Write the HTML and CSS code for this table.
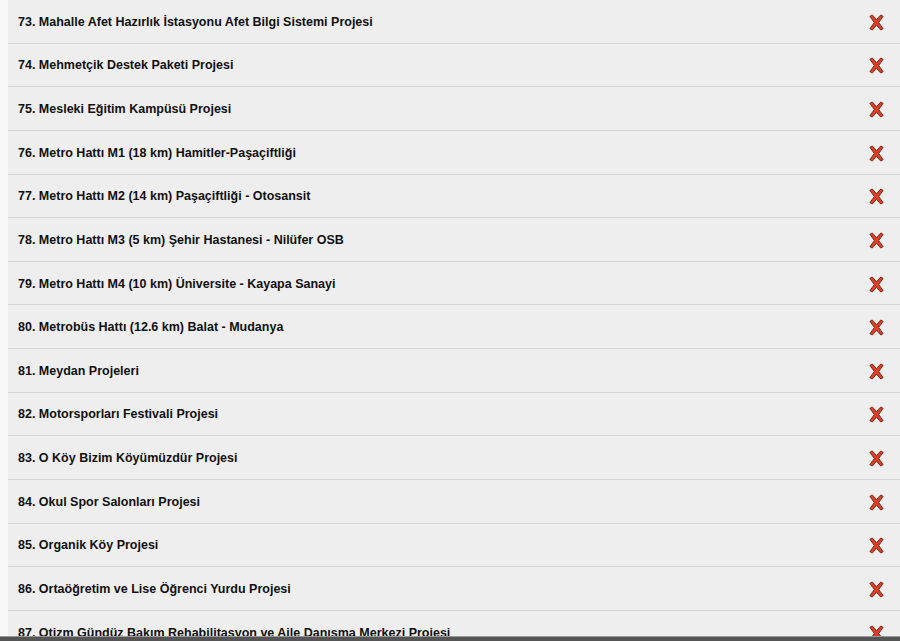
FILE: index.html
```html
<!DOCTYPE html>
<html lang="tr">
<head>
    <meta charset="UTF-8">
    <title>Projeler</title>
    <link rel="stylesheet" href="styles.css">
</head>
<body>

    <!-- Project list -->
    <ul class="project-list">
        <li class="project-row"><span class="project-name">73. Mahalle Afet Hazırlık İstasyonu Afet Bilgi Sistemi Projesi</span><a href="#" class="remove-btn"><svg viewBox="0 0 20 18"><path d="M3 2.5 L5.5 1 L10 6 L14.5 1 L17 2.5 L12.3 9 L17 15.5 L14.5 17 L10 12 L5.5 17 L3 15.5 L7.7 9 Z"/></svg></a></li>
        <li class="project-row"><span class="project-name">74. Mehmetçik Destek Paketi Projesi</span><a href="#" class="remove-btn"><svg viewBox="0 0 20 18"><path d="M3 2.5 L5.5 1 L10 6 L14.5 1 L17 2.5 L12.3 9 L17 15.5 L14.5 17 L10 12 L5.5 17 L3 15.5 L7.7 9 Z"/></svg></a></li>
        <li class="project-row"><span class="project-name">75. Mesleki Eğitim Kampüsü Projesi</span><a href="#" class="remove-btn"><svg viewBox="0 0 20 18"><path d="M3 2.5 L5.5 1 L10 6 L14.5 1 L17 2.5 L12.3 9 L17 15.5 L14.5 17 L10 12 L5.5 17 L3 15.5 L7.7 9 Z"/></svg></a></li>
        <li class="project-row"><span class="project-name">76. Metro Hattı M1 (18 km) Hamitler-Paşaçiftliği</span><a href="#" class="remove-btn"><svg viewBox="0 0 20 18"><path d="M3 2.5 L5.5 1 L10 6 L14.5 1 L17 2.5 L12.3 9 L17 15.5 L14.5 17 L10 12 L5.5 17 L3 15.5 L7.7 9 Z"/></svg></a></li>
        <li class="project-row"><span class="project-name">77. Metro Hattı M2 (14 km) Paşaçiftliği - Otosansit</span><a href="#" class="remove-btn"><svg viewBox="0 0 20 18"><path d="M3 2.5 L5.5 1 L10 6 L14.5 1 L17 2.5 L12.3 9 L17 15.5 L14.5 17 L10 12 L5.5 17 L3 15.5 L7.7 9 Z"/></svg></a></li>
        <li class="project-row"><span class="project-name">78. Metro Hattı M3 (5 km) Şehir Hastanesi - Nilüfer OSB</span><a href="#" class="remove-btn"><svg viewBox="0 0 20 18"><path d="M3 2.5 L5.5 1 L10 6 L14.5 1 L17 2.5 L12.3 9 L17 15.5 L14.5 17 L10 12 L5.5 17 L3 15.5 L7.7 9 Z"/></svg></a></li>
        <li class="project-row"><span class="project-name">79. Metro Hattı M4 (10 km) Üniversite - Kayapa Sanayi</span><a href="#" class="remove-btn"><svg viewBox="0 0 20 18"><path d="M3 2.5 L5.5 1 L10 6 L14.5 1 L17 2.5 L12.3 9 L17 15.5 L14.5 17 L10 12 L5.5 17 L3 15.5 L7.7 9 Z"/></svg></a></li>
        <li class="project-row"><span class="project-name">80. Metrobüs Hattı (12.6 km) Balat - Mudanya</span><a href="#" class="remove-btn"><svg viewBox="0 0 20 18"><path d="M3 2.5 L5.5 1 L10 6 L14.5 1 L17 2.5 L12.3 9 L17 15.5 L14.5 17 L10 12 L5.5 17 L3 15.5 L7.7 9 Z"/></svg></a></li>
        <li class="project-row"><span class="project-name">81. Meydan Projeleri</span><a href="#" class="remove-btn"><svg viewBox="0 0 20 18"><path d="M3 2.5 L5.5 1 L10 6 L14.5 1 L17 2.5 L12.3 9 L17 15.5 L14.5 17 L10 12 L5.5 17 L3 15.5 L7.7 9 Z"/></svg></a></li>
        <li class="project-row"><span class="project-name">82. Motorsporları Festivali Projesi</span><a href="#" class="remove-btn"><svg viewBox="0 0 20 18"><path d="M3 2.5 L5.5 1 L10 6 L14.5 1 L17 2.5 L12.3 9 L17 15.5 L14.5 17 L10 12 L5.5 17 L3 15.5 L7.7 9 Z"/></svg></a></li>
        <li class="project-row"><span class="project-name">83. O Köy Bizim Köyümüzdür Projesi</span><a href="#" class="remove-btn"><svg viewBox="0 0 20 18"><path d="M3 2.5 L5.5 1 L10 6 L14.5 1 L17 2.5 L12.3 9 L17 15.5 L14.5 17 L10 12 L5.5 17 L3 15.5 L7.7 9 Z"/></svg></a></li>
        <li class="project-row"><span class="project-name">84. Okul Spor Salonları Projesi</span><a href="#" class="remove-btn"><svg viewBox="0 0 20 18"><path d="M3 2.5 L5.5 1 L10 6 L14.5 1 L17 2.5 L12.3 9 L17 15.5 L14.5 17 L10 12 L5.5 17 L3 15.5 L7.7 9 Z"/></svg></a></li>
        <li class="project-row"><span class="project-name">85. Organik Köy Projesi</span><a href="#" class="remove-btn"><svg viewBox="0 0 20 18"><path d="M3 2.5 L5.5 1 L10 6 L14.5 1 L17 2.5 L12.3 9 L17 15.5 L14.5 17 L10 12 L5.5 17 L3 15.5 L7.7 9 Z"/></svg></a></li>
        <li class="project-row"><span class="project-name">86. Ortaöğretim ve Lise Öğrenci Yurdu Projesi</span><a href="#" class="remove-btn"><svg viewBox="0 0 20 18"><path d="M3 2.5 L5.5 1 L10 6 L14.5 1 L17 2.5 L12.3 9 L17 15.5 L14.5 17 L10 12 L5.5 17 L3 15.5 L7.7 9 Z"/></svg></a></li>
        <li class="project-row"><span class="project-name">87. Otizm Gündüz Bakım Rehabilitasyon ve Aile Danışma Merkezi Projesi</span><a href="#" class="remove-btn"><svg viewBox="0 0 20 18"><path d="M3 2.5 L5.5 1 L10 6 L14.5 1 L17 2.5 L12.3 9 L17 15.5 L14.5 17 L10 12 L5.5 17 L3 15.5 L7.7 9 Z"/></svg></a></li>
    </ul>

    <div class="bottom-bar"></div>

</body>
</html>
```

FILE: styles.css
```css
html, body {
    height: 100%;
    overflow: hidden;
}

body {
    margin: 0;
    background: #f8f8f8;
    font-family: 'Liberation Sans', Arial, sans-serif;
    color: #111;
}

.project-list {
    list-style: none;
    margin: 0 0 0 8px;
    padding: 0;
    background: #eeeeee;
}

.project-row {
    display: flex;
    align-items: center;
    justify-content: space-between;
    box-sizing: border-box;
    height: 43.64px;
    padding: 0 14px 0 10px;
    border-bottom: 1px solid #d6d6d6;
}

.project-name {
    font-size: 12.5px;
    font-weight: bold;
    padding-top: 1px;
}

/* Red cross remove button */
.remove-btn {
    display: block;
    width: 19px;
    height: 17px;
    margin-top: 2px;
}

.remove-btn svg {
    display: block;
    width: 19px;
    height: 17px;
}

.remove-btn path {
    fill: #dc3d24;
    stroke: #6e2a1c;
    stroke-width: 1;
    stroke-linejoin: round;
}

.bottom-bar {
    position: fixed;
    left: 0;
    right: 0;
    bottom: 0;
    height: 4px;
    background: #555;
    border-top: 1px solid #9a9a9a;
}
```
